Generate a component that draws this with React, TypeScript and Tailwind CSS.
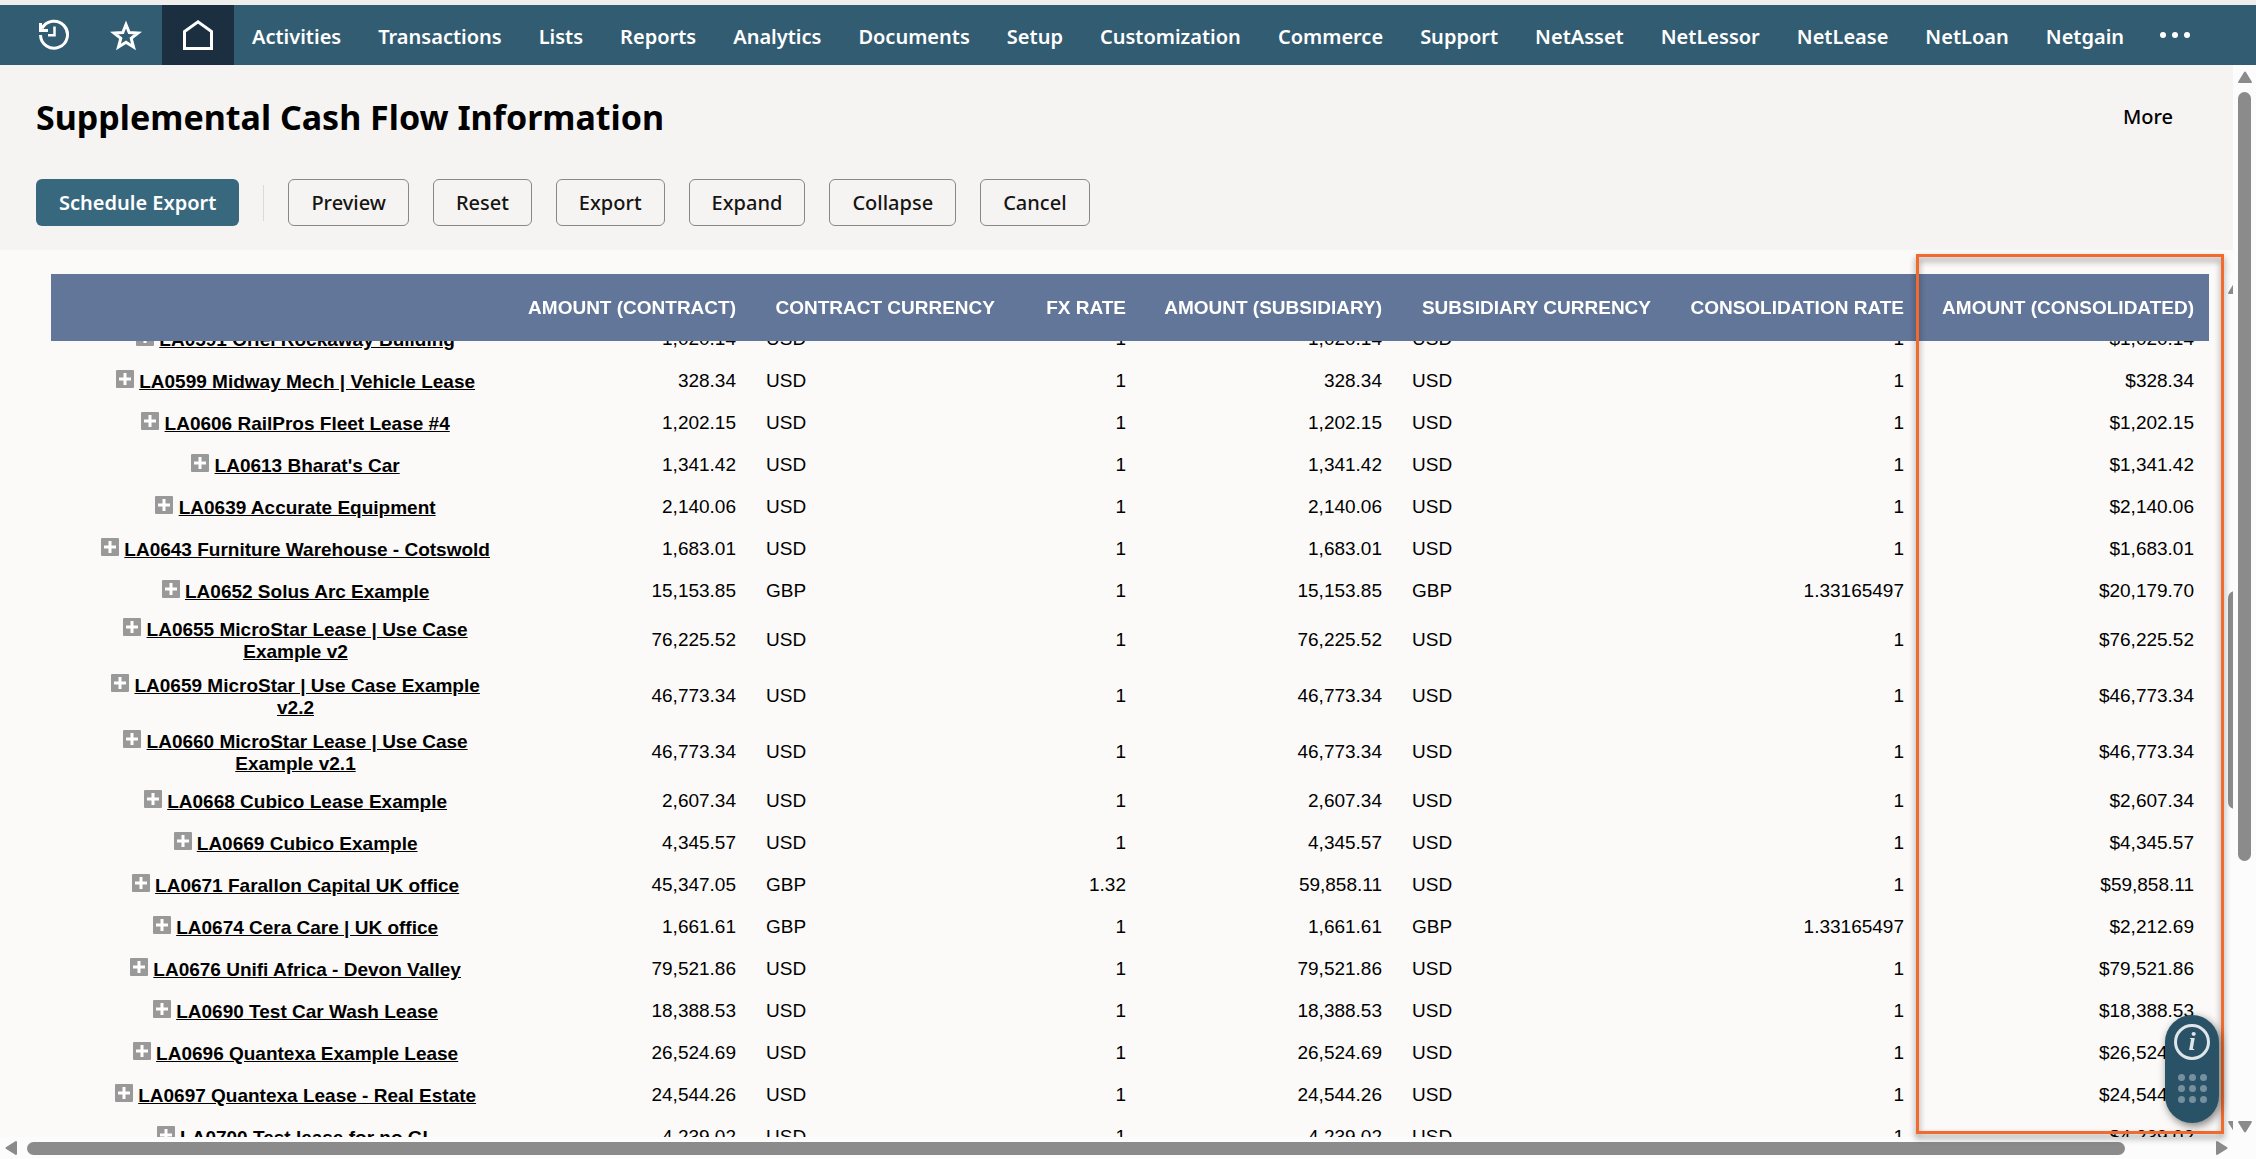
import { useLayoutEffect, useRef } from "react";
import clsx from "clsx";

interface LeaseRow {
  name: string;
  amount: string;
  currency: string;
  fxRate: string;
  subsidiaryAmount: string;
  subsidiaryCurrency: string;
  consolidationRate: string;
  consolidated: string;
}

const MENU = [
  "Activities",
  "Transactions",
  "Lists",
  "Reports",
  "Analytics",
  "Documents",
  "Setup",
  "Customization",
  "Commerce",
  "Support",
  "NetAsset",
  "NetLessor",
  "NetLease",
  "NetLoan",
  "Netgain",
];

const ACTIONS = ["Preview", "Reset", "Export", "Expand", "Collapse", "Cancel"];

const COLUMNS = [
  { label: "", width: "" },
  { label: "Amount (Contract)", width: "w-[246px]" },
  { label: "Contract Currency", width: "w-[259px]" },
  { label: "FX Rate", width: "w-[131px]" },
  { label: "Amount (Subsidiary)", width: "w-[256px]" },
  { label: "Subsidiary Currency", width: "w-[269px]" },
  { label: "Consolidation Rate", width: "w-[253px]" },
  { label: "Amount (Consolidated)", width: "w-[290px]" },
];

function usd(name: string, amount: string): LeaseRow {
  return {
    name,
    amount,
    currency: "USD",
    fxRate: "1",
    subsidiaryAmount: amount,
    subsidiaryCurrency: "USD",
    consolidationRate: "1",
    consolidated: `$${amount}`,
  };
}

function gbp(name: string, amount: string, consolidated: string): LeaseRow {
  return {
    ...usd(name, amount),
    currency: "GBP",
    subsidiaryCurrency: "GBP",
    consolidationRate: "1.33165497",
    consolidated,
  };
}

const ROWS: LeaseRow[] = [
  usd("LA0591 Oriel Rockaway Building", "1,020.14"),
  usd("LA0599 Midway Mech | Vehicle Lease", "328.34"),
  usd("LA0606 RailPros Fleet Lease #4", "1,202.15"),
  usd("LA0613 Bharat's Car", "1,341.42"),
  usd("LA0639 Accurate Equipment", "2,140.06"),
  usd("LA0643 Furniture Warehouse - Cotswold", "1,683.01"),
  gbp("LA0652 Solus Arc Example", "15,153.85", "$20,179.70"),
  usd("LA0655 MicroStar Lease | Use Case Example v2", "76,225.52"),
  usd("LA0659 MicroStar | Use Case Example v2.2", "46,773.34"),
  usd("LA0660 MicroStar Lease | Use Case Example v2.1", "46,773.34"),
  usd("LA0668 Cubico Lease Example", "2,607.34"),
  usd("LA0669 Cubico Example", "4,345.57"),
  {
    ...usd("LA0671 Farallon Capital UK office", "45,347.05"),
    currency: "GBP",
    fxRate: "1.32",
    subsidiaryAmount: "59,858.11",
    consolidated: "$59,858.11",
  },
  gbp("LA0674 Cera Care | UK office", "1,661.61", "$2,212.69"),
  usd("LA0676 Unifi Africa - Devon Valley", "79,521.86"),
  usd("LA0690 Test Car Wash Lease", "18,388.53"),
  usd("LA0696 Quantexa Example Lease", "26,524.69"),
  usd("LA0697 Quantexa Lease - Real Estate", "24,544.26"),
  usd("LA0700 Test lease for no GL", "4,239.02"),
];

function HistoryIcon() {
  return (
    <svg viewBox="0 0 32 32" className="h-8 w-8" fill="none" stroke="currentColor" strokeWidth="3">
      <path d="M4 9.500A13.500 13.500 0 1 1 2.500 16" />
      <path d="M2.500 4v7.500h7.500" />
      <path d="M16.500 7.500v8.800h-6.500" strokeWidth="2.500" />
    </svg>
  );
}

function StarIcon() {
  return (
    <svg viewBox="0 0 32 32" className="h-8 w-8" fill="none" stroke="currentColor" strokeWidth="3">
      <path d="M16 5.500l3.200 8 8.800.5-6.800 5.400 2.300 8.600-7.500-4.800-7.500 4.800 2.300-8.600L4 14l8.800-.5z" />
    </svg>
  );
}

function HomeIcon() {
  return (
    <svg viewBox="0 0 32 32" className="h-8 w-8" fill="none" stroke="currentColor" strokeWidth="3">
      <path d="M2.500 29.500V12.500L16 2.800l13.500 9.700v17z" />
    </svg>
  );
}

function PlusIcon() {
  return (
    <svg viewBox="0 0 18 18" className="inline-block h-[18px] w-[18px] align-baseline">
      <rect width="18" height="18" rx="1" fill="#999999" />
      <path d="M9 3v12M3 9h12" stroke="#ffffff" strokeWidth="3" />
    </svg>
  );
}

function Arrow({ direction }: { direction: "up" | "down" | "left" | "right" }) {
  const turn = { up: "", down: "rotate-180", left: "-rotate-90", right: "rotate-90" }[direction];
  return (
    <svg viewBox="0 0 14 12" className={clsx("h-3 w-3.5 shrink-0", turn)} fill="#8b8b8b">
      <path d="M6 1.200a1.200 1.200 0 0 1 2 0l5.700 9.200a1 1 0 0 1-.8 1.600H1.100a1 1 0 0 1-.8-1.600z" />
    </svg>
  );
}

function TopNav() {
  return (
    <nav className="flex h-[60px] shrink-0 items-center bg-[#325c72] text-[20px] font-semibold text-white">
      <button aria-label="Recent records" className="flex h-full w-[90px] items-center justify-end pr-5">
        <HistoryIcon />
      </button>
      <button aria-label="Shortcuts" className="flex h-full w-[72px] items-center justify-center">
        <StarIcon />
      </button>
      <button aria-label="Home" className="flex h-full w-[72px] items-center justify-center bg-[#1b2f40]">
        <HomeIcon />
      </button>
      <div className="flex gap-[37px] pt-1 pl-[18px]">
        {MENU.map((item) => (
          <a key={item} href="#" className="whitespace-nowrap">
            {item}
          </a>
        ))}
      </div>
      <button aria-label="More menus" className="ml-9 flex gap-1.5">
        {[0, 1, 2].map((i) => (
          <span key={i} className="h-1.5 w-1.5 rounded-full bg-white" />
        ))}
      </button>
    </nav>
  );
}

function PageHeader() {
  return (
    <header className="h-[185px] shrink-0 bg-[#f5f4f2] pt-6 pr-[60px] pl-9">
      <div className="flex h-14 items-center justify-between">
        <h1 className="text-[34px] font-bold text-black">Supplemental Cash Flow Information</h1>
        <a href="#" className="text-[20px] font-medium text-black">
          More
        </a>
      </div>
      <div className="mt-[34px] flex h-[47px] items-center gap-6 text-[20px] font-medium text-[#161513]">
        <button className="h-full rounded-md bg-[#38687e] px-[23px] font-semibold text-white">
          Schedule Export
        </button>
        <span className="h-9 w-px bg-[#dcdad7]" />
        {ACTIONS.map((action) => (
          <button key={action} className="h-full rounded-md border border-[#8a8885] px-[22px]">
            {action}
          </button>
        ))}
      </div>
    </header>
  );
}

function ReportTable() {
  const scroller = useRef<HTMLDivElement>(null);

  useLayoutEffect(() => {
    if (scroller.current) scroller.current.scrollTop = 23;
  }, []);

  return (
    <div ref={scroller} className="min-w-0 flex-1 overflow-hidden">
      <table className="w-full table-fixed font-['Liberation_Sans',Arial,sans-serif] text-[19px] leading-[22px] text-black">
        <thead className="sticky top-0 z-10 bg-[#627699] text-white">
          <tr className="h-[67px]">
            {COLUMNS.map((column) => (
              <th
                key={column.label}
                className={clsx("pr-[15px] text-right font-bold whitespace-nowrap uppercase", column.width)}
              >
                {column.label}
              </th>
            ))}
          </tr>
        </thead>
        <tbody>
          {ROWS.map((row) => (
            <tr key={row.name} className="h-[42px]">
              <td className="pt-[6px] pr-[7px] pb-[5px] pl-[42px] text-center font-bold">
                <PlusIcon />{" "}
                <a href="#" className="underline">
                  {row.name}
                </a>
              </td>
              <td className="pr-[15px] text-right">{row.amount}</td>
              <td className="pl-[15px]">{row.currency}</td>
              <td className="pr-[15px] text-right">{row.fxRate}</td>
              <td className="pr-[15px] text-right">{row.subsidiaryAmount}</td>
              <td className="pl-[15px]">{row.subsidiaryCurrency}</td>
              <td className="pr-[15px] text-right">{row.consolidationRate}</td>
              <td className="pr-[15px] text-right">{row.consolidated}</td>
            </tr>
          ))}
        </tbody>
      </table>
    </div>
  );
}

function HelpDock() {
  return (
    <div className="absolute right-3.5 bottom-3.5 z-20 flex h-[108px] w-[54px] flex-col items-center gap-3.5 rounded-full bg-[#2a5266] pt-[9px] shadow-[2px_3px_8px_rgba(0,0,0,0.5)]">
      <button
        aria-label="Help"
        className="flex h-9 w-9 items-center justify-center rounded-full border-3 border-[#dfe5e9] font-['Liberation_Serif',serif] text-[26px] leading-none font-bold text-[#dfe5e9] italic"
      >
        i
      </button>
      <button aria-label="Apps" className="grid grid-cols-3 gap-1">
        {Array.from({ length: 9 }, (_, i) => (
          <span key={i} className="h-[7px] w-[7px] rounded-full bg-[#7690a0]" />
        ))}
      </button>
    </div>
  );
}

export default function App() {
  return (
    <div className="flex h-screen flex-col overflow-hidden bg-[#fbfaf8] font-['Noto_Sans','Open_Sans',sans-serif]">
      <div className="h-[5px] shrink-0 bg-[#efeeec]" />
      <TopNav />
      <div className="flex min-h-0 flex-1">
        <main className="flex min-w-0 flex-1 flex-col">
          <PageHeader />
          <section className="relative flex min-h-0 flex-1 pt-6 pl-[51px]">
            <ReportTable />
            <div className="ml-[15px] flex w-[9px] flex-col items-start overflow-hidden bg-[#fcfcfc] pt-2 pb-1 pl-1">
              <Arrow direction="up" />
              <div className="mt-[297px] h-[218px] w-3.5 shrink-0 rounded-full bg-[#8b8b8b]" />
              <div className="flex-1" />
              <Arrow direction="down" />
            </div>
            {/* callout around the consolidated column */}
            <div className="pointer-events-none absolute top-1 right-[9px] bottom-[3px] z-10 w-[308px] border-3 border-[#f26b2e] drop-shadow-[0_4px_3px_rgba(0,0,0,0.45)]" />
            <HelpDock />
          </section>
        </main>
        <div className="flex w-[23px] shrink-0 flex-col items-center bg-[#fcfcfc] pt-1.5 pb-1">
          <Arrow direction="up" />
          <div className="mt-[9px] h-[769px] w-[13px] rounded-full bg-[#8b8b8b]" />
          <div className="flex-1" />
          <Arrow direction="down" />
        </div>
      </div>
      <div className="flex h-[22px] shrink-0 items-center bg-[#fcfcfc] pr-[27px] pl-1">
        <Arrow direction="left" />
        <div className="mr-[90px] ml-[9px] h-[13px] flex-1 rounded-full bg-[#8b8b8b]" />
        <Arrow direction="right" />
      </div>
    </div>
  );
}
